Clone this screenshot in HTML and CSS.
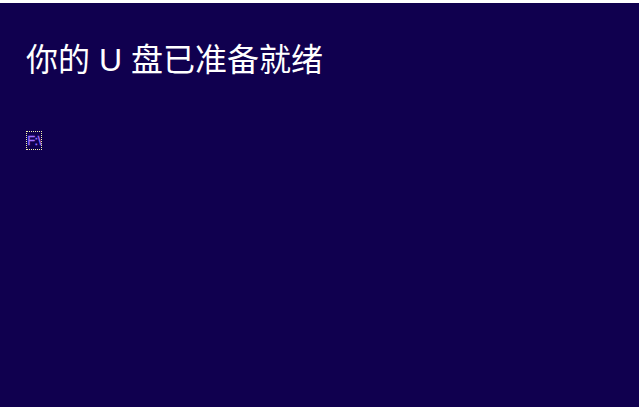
FILE: index.html
```html
<!DOCTYPE html>
<html lang="zh-CN">
<head>
    <meta charset="UTF-8">
    <meta name="viewport" content="width=device-width, initial-scale=1.0">
    <title>你的 U 盘已准备就绪</title>
    <link rel="stylesheet" href="styles.css">
</head>
<body>
    <div class="screen">
        <h1 class="title">你的 U 盘已准备就绪</h1>
        <div class="drive-list">
            <span class="drive">F:\</span>
        </div>
    </div>
</body>
</html>
```

FILE: styles.css
```css
* { box-sizing: border-box; }

html, body {
    height: 100%;
}

body {
    margin: 0;
    padding-top: 3px;
    background: #fff;
    font-family: "Liberation Sans", "Noto Sans CJK SC", sans-serif;
    overflow: hidden;
}

.screen {
    height: 100%;
    padding: 37px 26px 0;
    background: #10004f;
    color: #fff;
}

.title {
    margin: 0;
    font-size: 32px;
    font-weight: 400;
    line-height: 40px;
}

.drive-list {
    margin-top: 51px;
    display: flex;
}

.drive {
    width: 16px;
    height: 19px;
    border: 1px dotted #f4f4b0;
    color: #a070ff;
    font-size: 13px;
    letter-spacing: -0.5px;
    line-height: 18px;
    text-align: center;
    white-space: nowrap;
    -webkit-text-stroke: 0.3px #a070ff;
}
```
